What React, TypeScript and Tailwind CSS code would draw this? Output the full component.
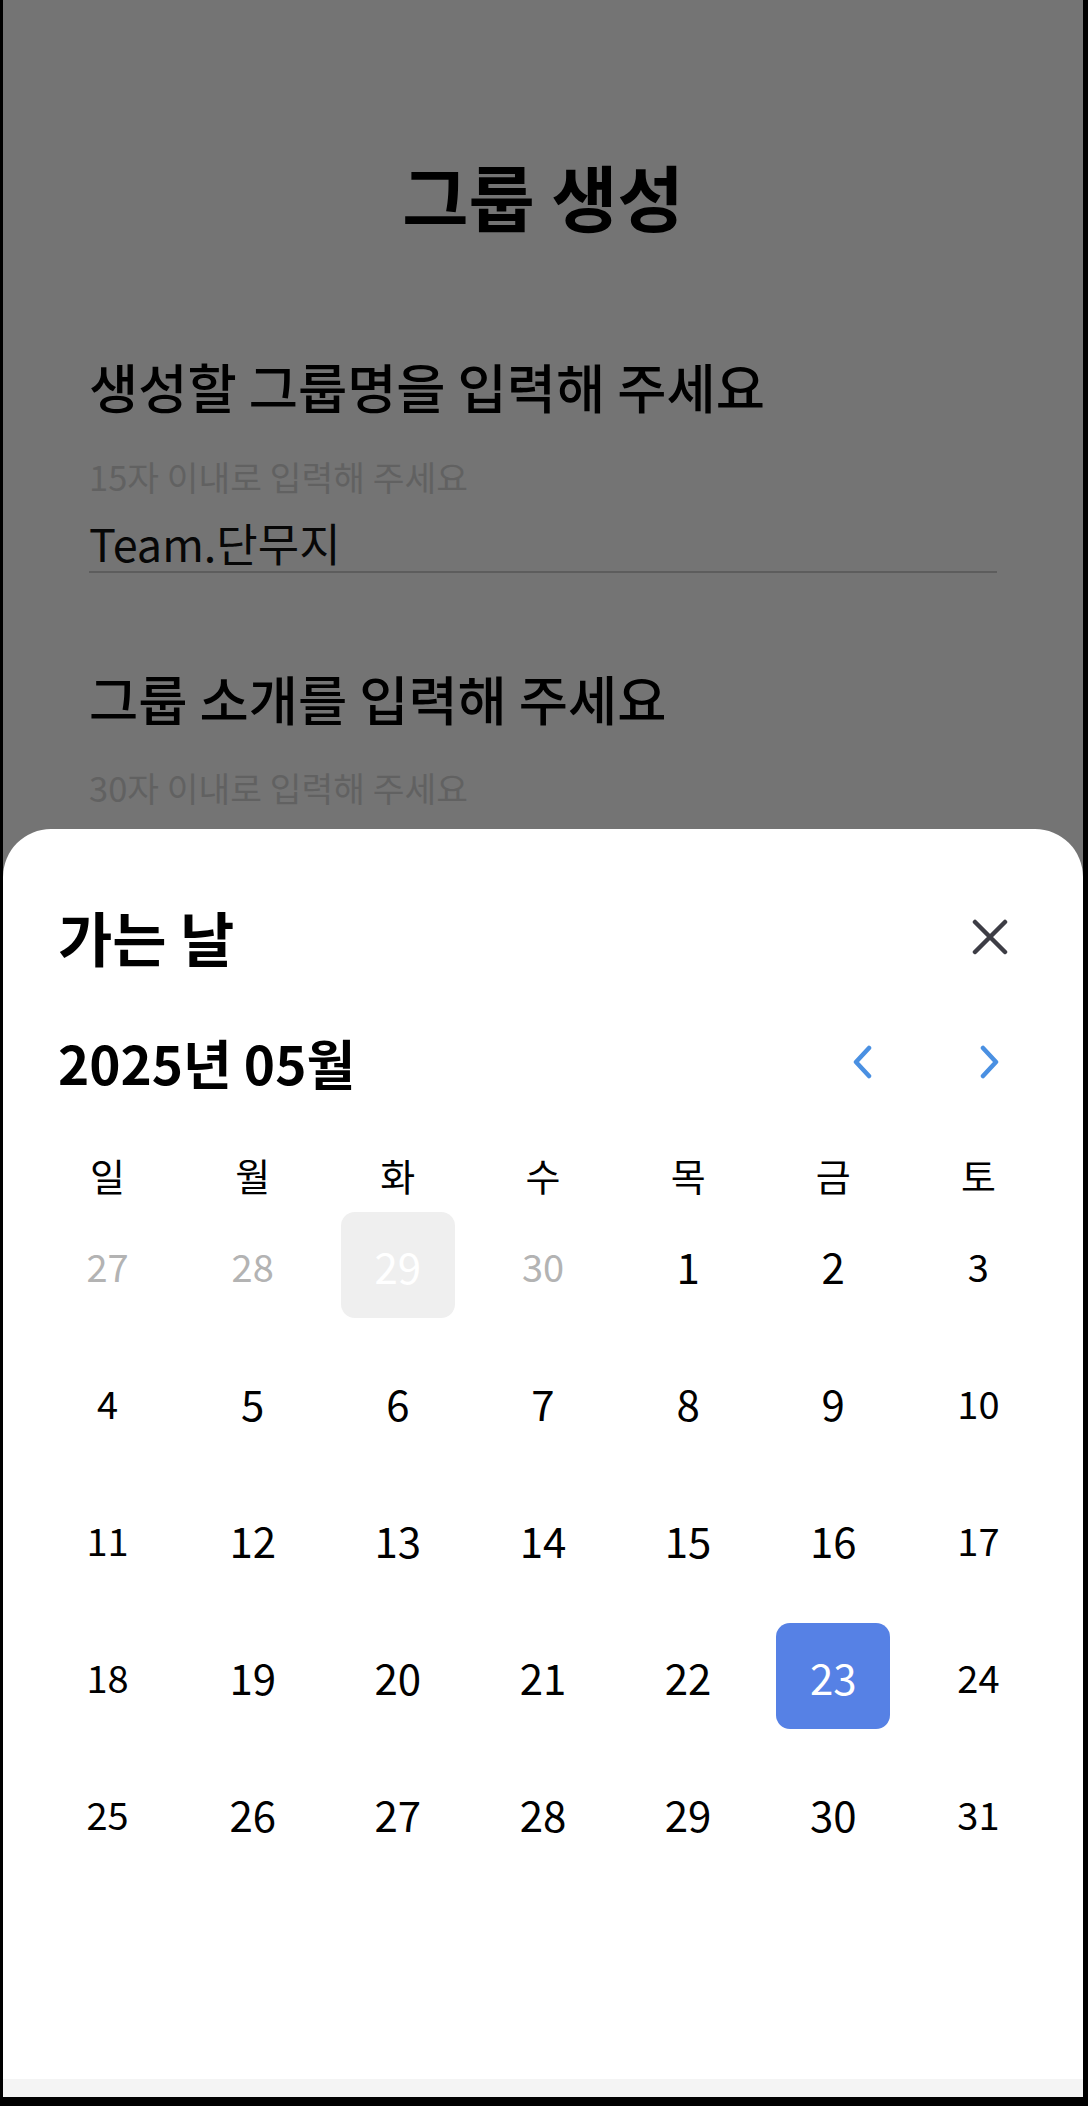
import React from "react"

type Day = { n: number; kind: 'prev' | 'today' | 'cur' | 'sel' }

const WEEK = ['일', '월', '화', '수', '목', '금', '토']

const buildDays = (): Day[] => {
  const list: Day[] = [
    { n: 27, kind: 'prev' },
    { n: 28, kind: 'prev' },
    { n: 29, kind: 'today' },
    { n: 30, kind: 'prev' },
  ]
  for (let i = 1; i <= 31; i++) {
    list.push({ n: i, kind: i === 23 ? 'sel' : 'cur' })
  }
  return list
}

const CloseIcon = () => (
  <svg width="36" height="36" viewBox="0 0 36 36" fill="none">
    <path d="M3 3L33 33M33 3L3 33" stroke="#3d3d45" strokeWidth="4.5" strokeLinecap="round" />
  </svg>
)

const Chevron = ({ dir }: { dir: 'left' | 'right' }) => (
  <svg width="22" height="34" viewBox="0 0 22 34" fill="none">
    <path
      d={dir === 'left' ? 'M18 3L5 17L18 31' : 'M4 3L17 17L4 31'}
      stroke="#4a90e2"
      strokeWidth="4.5"
      strokeLinecap="round"
      strokeLinejoin="round"
    />
  </svg>
)

const DayCell = ({ day, col }: { day: Day; col: number }) => {
  const small = day.kind === 'prev' || col === 0 || col === 6
  let tone = 'text-black'
  if (day.kind === 'prev') tone = 'text-[#b3b3b3]'
  if (day.kind === 'today') tone = 'bg-[#efefef] text-white'
  if (day.kind === 'sel') tone = 'bg-[#5681e5] text-white'

  return (
    <div className="flex justify-center">
      <div
        className={`flex h-[106px] w-[114px] items-center justify-center rounded-[14px] ${tone} ${
          small ? 'text-[38px]' : 'text-[42px]'
        }`}
      >
        {day.n}
      </div>
    </div>
  )
}

const App = () => {
  const days = buildDays()

  return (
    <div className="h-[2106px] w-[1088px] bg-black font-['Noto_Sans_CJK_KR','Noto_Sans',sans-serif]">
      <div className="relative ml-[3px] h-[2097px] w-[1080px] overflow-hidden bg-white">
        {/* page behind the sheet */}
        <div className="flex flex-col px-[86px] pt-[155px]">
          <h1 className="text-center text-[72px] font-bold leading-[80px] text-black">그룹 생성</h1>

          <div className="mt-[119px] text-[53.5px] font-medium leading-[64px] text-black">생성할 그룹명을 입력해 주세요</div>
          <div className="mt-[38px] text-[34.5px] leading-[40px] text-[#d6d6d6]">15자 이내로 입력해 주세요</div>
          <div className="mt-[21px] border-b-2 border-[#cccccc] pb-[2px]">
            <div className="text-[45px] leading-[52px] text-[#111]">Team.단무지</div>
          </div>

          <div className="mt-[93px] text-[53.5px] font-medium leading-[64px] text-black">그룹 소개를 입력해 주세요</div>
          <div className="mt-[37px] text-[34.5px] leading-[40px] text-[#d6d6d6]">30자 이내로 입력해 주세요</div>
        </div>

        {/* dim */}
        <div className="absolute inset-0 bg-[rgba(0,0,0,0.545)]" />

        {/* bottom sheet */}
        <div className="absolute bottom-0 left-0 right-0 top-[829px] flex flex-col rounded-t-[48px] bg-white">
          <div className="mt-[76px] flex h-[64px] items-center justify-between pl-[55px] pr-[69px]">
            <span className="text-[59px] font-bold leading-[64px] text-black">가는 날</span>
            <button className="flex h-[48px] w-[48px] items-center justify-center">
              <CloseIcon />
            </button>
          </div>

          <div className="mt-[61px] flex h-[64px] items-center justify-between pl-[55px] pr-[69px]">
            <span className="text-[53px] font-bold leading-[64px] text-black">2025년 05월</span>
            <div className="flex items-center gap-[80px]">
              <button className="flex h-[48px] w-[48px] items-center justify-center">
                <Chevron dir="left" />
              </button>
              <button className="flex h-[48px] w-[48px] items-center justify-center">
                <Chevron dir="right" />
              </button>
            </div>
          </div>

          <div className="mt-[56px] grid grid-cols-7 px-[32px]">
            {WEEK.map((w) => (
              <div key={w} className="text-center text-[38px] leading-[50px] text-black">
                {w}
              </div>
            ))}
          </div>

          <div className="mt-[12px] grid grid-cols-7 gap-y-[31px] px-[32px]">
            {days.map((d, i) => (
              <DayCell key={`${d.kind}-${d.n}`} day={d} col={i % 7} />
            ))}
          </div>

          <div className="mt-auto h-[18px] bg-[#f4f4f4]" />
        </div>
      </div>
    </div>
  )
}

export default App
